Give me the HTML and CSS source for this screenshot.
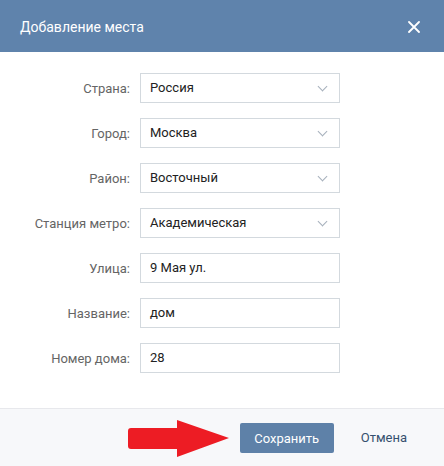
FILE: index.html
```html
<!DOCTYPE html>
<html lang="ru">
<head>
  <meta charset="UTF-8">
  <title>Добавление места</title>
  <link rel="stylesheet" href="styles.css">
</head>
<body>

<div class="box">
  <div class="box-header">
    <div class="box-title">Добавление места</div>
    <svg class="box-close" width="12" height="12" viewBox="0 0 12 12">
      <path d="M1 1L11 11M11 1L1 11" stroke="#fff" stroke-width="1.8" stroke-linecap="round" fill="none"/>
    </svg>
  </div>

  <div class="box-body">
    <div class="form">
      <label>Страна:</label>
      <div class="field select">Россия<span class="chevron"></span></div>

      <label>Город:</label>
      <div class="field select">Москва<span class="chevron"></span></div>

      <label>Район:</label>
      <div class="field select">Восточный<span class="chevron"></span></div>

      <label>Станция метро:</label>
      <div class="field select">Академическая<span class="chevron"></span></div>

      <label>Улица:</label>
      <div class="field">9 Мая ул.</div>

      <label>Название:</label>
      <div class="field">дом</div>

      <label>Номер дома:</label>
      <div class="field">28</div>
    </div>
  </div>

  <div class="box-footer">
    <svg class="arrow" width="101" height="38" viewBox="0 0 101 38">
      <path d="M3 8H49V0L101 18L49 37V29H3Q0 29 0 26V11Q0 8 3 8Z" fill="#ed1c24"/>
    </svg>
    <button class="btn">Сохранить</button>
    <a class="cancel">Отмена</a>
  </div>
</div>

</body>
</html>
```

FILE: styles.css
```css
* {
  box-sizing: border-box;
}

body {
  margin: 0;
  background: #fff;
  font-family: Roboto, 'Open Sans', sans-serif;
  font-size: 13px;
  color: #000;
}

.box {
  width: 444px;
  height: 466px;
  overflow: hidden;
}

.box-header {
  height: 52px;
  background: #5f83ac;
  display: flex;
  align-items: center;
  justify-content: space-between;
  padding: 0 24px 0 20px;
}

.box-title {
  color: #fff;
  font-size: 14px;
  padding-top: 1px;
}

.box-close {
  margin-top: 1px;
}

.box-body {
  padding: 21px 0 35px;
}

.form {
  display: grid;
  grid-template-columns: 130px 200px;
  column-gap: 10px;
  row-gap: 15px;
  align-items: center;
}

label {
  text-align: right;
  color: #656565;
}

.field {
  position: relative;
  height: 30px;
  border: 1px solid #d3d9de;
  padding: 0 9px;
  line-height: 28px;
  color: #222;
}

.chevron {
  position: absolute;
  right: 13px;
  top: 9px;
  width: 7px;
  height: 7px;
  border-right: 1px solid #a6b0bc;
  border-bottom: 1px solid #a6b0bc;
  transform: rotate(45deg);
}

.box-footer {
  height: 58px;
  background: #f7f8fa;
  border-top: 1px solid #e7e8ec;
  display: flex;
  align-items: flex-start;
  justify-content: flex-end;
  padding: 11px 23px 0 0;
}

.arrow {
  margin: 0 11px 0 0;
}

.btn {
  margin-top: 3px;
  width: 94px;
  height: 30px;
  background: #5e81a8;
  border: none;
  border-radius: 2px;
  color: #fff;
  font-family: inherit;
  font-size: 13px;
  padding: 0;
}

.cancel {
  margin-top: 3px;
  padding: 0 14px 0 27px;
  line-height: 30px;
  color: #35506e;
}
```
